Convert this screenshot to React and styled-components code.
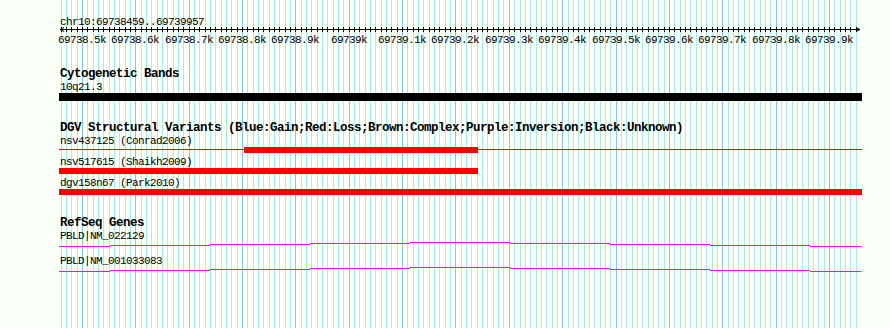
import React from "react";
import styled, { createGlobalStyle } from "styled-components";

const START = 69738459;
const END = 69739957;
const LEFT = 60;
const SPAN = 800;
const TRACK_LEFT = 59;
const TRACK_RIGHT = 862;

const bpToX = (bp) => LEFT + ((bp - START) * SPAN) / (END - START + 1);

const GlobalStyle = createGlobalStyle`
  body {
    margin: 0;
    background: #fafff8;
  }
`;

const Panel = styled.div`
  position: relative;
  width: 890px;
  height: 328px;
  padding-top: 17px;
  box-sizing: border-box;
  overflow: hidden;
  color: #000;
  font-family: "Liberation Mono", "DejaVu Sans Mono", monospace;
`;

const GridLayer = styled.svg`
  position: absolute;
  left: 0;
  top: 0;
  z-index: 0;
`;

const Content = styled.div`
  position: relative;
  z-index: 1;
`;

const RulerTitle = styled.div`
  padding-left: 60px;
  font-size: 11px;
  letter-spacing: -0.6px;
  line-height: 10px;
  height: 10px;
`;

const RulerSvg = styled.svg`
  display: block;
`;

const Track = styled.section`
  padding-top: ${(p) => p.$gap}px;
`;

const TrackTitle = styled.div`
  padding-left: 60px;
  font-size: 12.5px;
  font-weight: bold;
  letter-spacing: -0.5px;
  line-height: 13px;
  height: 13px;
  white-space: nowrap;
`;

const FeatureLabel = styled.div`
  padding-left: 60px;
  font-size: 11px;
  letter-spacing: -0.6px;
  line-height: 12px;
  height: 12px;
  white-space: nowrap;
`;

const GlyphRow = styled.div`
  position: relative;
  margin-left: ${TRACK_LEFT}px;
  width: ${TRACK_RIGHT - TRACK_LEFT}px;
  height: ${(p) => p.$height}px;
  padding-bottom: ${(p) => p.$after || 0}px;
`;

const Bar = styled.div`
  position: absolute;
  top: ${(p) => p.$top || 0}px;
  height: ${(p) => p.$thick}px;
  background: ${(p) => p.$color};
`;

const GeneSvg = styled.svg`
  display: block;
  margin-left: ${TRACK_LEFT}px;
`;

// grid lines every 10bp, darker every 100bp
const gridLines = [];
for (let bp = 69738460; bp <= 69739950; bp += 10) {
  gridLines.push({ x: Math.round(bpToX(bp)), major: bp % 100 === 0 });
}

const tickLabels = [];
for (let bp = 69738500; bp <= 69739900; bp += 100) {
  const k = bp / 1000;
  const text = (bp % 1000 === 0 ? String(k) : k.toFixed(1)) + "k";
  tickLabels.push({ x: Math.round(bpToX(bp)), text });
}

const clampX = (bp) => Math.min(TRACK_RIGHT, Math.max(TRACK_LEFT, Math.round(bpToX(bp))));

const variants = [
  { name: "nsv437125 (Conrad2006)", from: 69738804, to: 69739242, line: true },
  { name: "nsv517615 (Shaikh2009)", from: 69730000, to: 69739242 },
  { name: "dgv158n67 (Park2010)", from: 69730000, to: 69749999 },
];

// intron "hat" of the gene, drawn in steps
const hatSteps = [59, 110, 210, 310, 410, 510, 610, 710, 810, 861];
const hatLevels = [4, 3, 2, 1, 0, 1, 2, 3, 4];

const genes = ["PBLD|NM_022129", "PBLD|NM_001033083"];

function Grid() {
  return (
    <GridLayer width="890" height="328" shapeRendering="crispEdges">
      {gridLines.map((g, i) => (
        <rect key={i} x={g.x} y="0" width="1" height="328" fill={g.major ? "#86c6ee" : "#a8ecec"} />
      ))}
    </GridLayer>
  );
}

function Ruler() {
  return (
    <RulerSvg width="890" height="19" shapeRendering="crispEdges">
      <rect x="60" y="2" width="800" height="1" fill="#000" />
      {gridLines.map((g, i) => (
        <rect key={i} x={g.x} y="0" width="1" height="5" fill="#000" />
      ))}
      <path d="M60 2.5 L64 0.5 M60 2.5 L64 4.5" stroke="#000" strokeWidth="1" fill="none" shapeRendering="auto" />
      <path d="M860 2.5 L856 0.5 M860 2.5 L856 4.5" stroke="#000" strokeWidth="1" fill="none" shapeRendering="auto" />
      {tickLabels.map((t) => (
        <text
          key={t.text}
          x={t.x}
          y="16"
          textAnchor="middle"
          fontFamily="Liberation Mono, monospace"
          fontSize="11"
          letterSpacing="-0.6"
          fill="#000"
        >
          {t.text}
        </text>
      ))}
    </RulerSvg>
  );
}

function GeneGlyph() {
  return (
    <GeneSvg width={TRACK_RIGHT - TRACK_LEFT} height="13" shapeRendering="crispEdges">
      {hatLevels.map((lvl, i) => (
        <rect
          key={i}
          x={hatSteps[i] - TRACK_LEFT}
          y={lvl}
          width={hatSteps[i + 1] - hatSteps[i]}
          height="1"
          fill="#ff00ff"
        />
      ))}
    </GeneSvg>
  );
}

export default function App() {
  return (
    <>
      <GlobalStyle />
      <Panel>
        <Grid />
        <Content>
          <RulerTitle>chr10:69738459..69739957</RulerTitle>
          <Ruler />

          <Track $gap={22}>
            <TrackTitle>Cytogenetic Bands</TrackTitle>
            <FeatureLabel>10q21.3</FeatureLabel>
            <GlyphRow $height={8}>
              <Bar $color="#000" $thick={8} style={{ left: 0, width: TRACK_RIGHT - TRACK_LEFT }} />
            </GlyphRow>
          </Track>

          <Track $gap={21}>
            <TrackTitle>
              DGV Structural Variants (Blue:Gain;Red:Loss;Brown:Complex;Purple:Inversion;Black:Unknown)
            </TrackTitle>
            {variants.map((v) => {
              const x1 = clampX(v.from);
              const x2 = clampX(v.to);
              return (
                <React.Fragment key={v.name}>
                  <FeatureLabel>{v.name}</FeatureLabel>
                  <GlyphRow $height={6} $after={3}>
                    {v.line && (
                      <Bar $color="#ff0000" $thick={1} $top={2} style={{ left: 0, width: TRACK_RIGHT - TRACK_LEFT }} />
                    )}
                    <Bar $color="#ff0000" $thick={6} style={{ left: x1 - TRACK_LEFT, width: x2 - x1 }} />
                  </GlyphRow>
                </React.Fragment>
              );
            })}
          </Track>

          <Track $gap={19}>
            <TrackTitle>RefSeq Genes</TrackTitle>
            {genes.map((g) => (
              <React.Fragment key={g}>
                <FeatureLabel>{g}</FeatureLabel>
                <GeneGlyph />
              </React.Fragment>
            ))}
          </Track>
        </Content>
      </Panel>
    </>
  );
}
